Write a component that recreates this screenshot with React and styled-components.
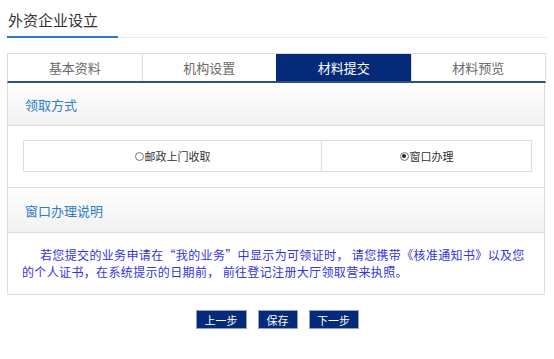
import React, { useState } from 'react';
import styled, { createGlobalStyle } from 'styled-components';

const GlobalStyle = createGlobalStyle`
  body {
    margin: 0;
    background: #fff;
    font-family: "Noto Sans CJK SC", "Noto Sans", sans-serif;
  }
`;

const tabs = ['基本资料', '机构设置', '材料提交', '材料预览'];

const options = [
  { key: 'post', label: '邮政上门收取' },
  { key: 'window', label: '窗口办理' },
];

export default function App() {
  const [active, setActive] = useState(2);
  const [method, setMethod] = useState('window');

  return (
    <>
      <GlobalStyle />
      <Page>
        <TitleBar>
          <Title>外资企业设立</Title>
        </TitleBar>

        <TabRow>
          {tabs.map((t, i) => (
            <Tab key={t} $active={i === active} onClick={() => setActive(i)}>
              {t}
            </Tab>
          ))}
        </TabRow>

        <Panel>
          <SectionHeader>领取方式</SectionHeader>
          <RadioWrap>
            <RadioRow>
              {options.map((o) => (
                <RadioCell key={o.key} onClick={() => setMethod(o.key)}>
                  <Dot $checked={method === o.key} />
                  {o.label}
                </RadioCell>
              ))}
            </RadioRow>
          </RadioWrap>

          <SectionHeader $top>窗口办理说明</SectionHeader>
          <Notice>
            若您提交的业务申请在“我的业务”中显示为可领证时， 请您携带《核准通知书》以及您的个人证书，在系统提示的日期前， 前往登记注册大厅领取营来执照。
          </Notice>
        </Panel>

        <Actions>
          <Button $w={51}>上一步</Button>
          <Button $w={40}>保存</Button>
          <Button $w={50}>下一步</Button>
        </Actions>
      </Page>
    </>
  );
}

const Page = styled.div`
  width: 540px;
  padding: 0 0 0 7px;
`;

const TitleBar = styled.div`
  height: 37px;
  border-bottom: 1px solid #e4ebf3;
  display: flex;
  align-items: flex-end;
`;

const Title = styled.div`
  width: 111px;
  height: 35px;
  box-sizing: border-box;
  padding: 6px 0 0 1px;
  border-bottom: 2px solid #2c78c4;
  margin-bottom: -1px;
  font-size: 15px;
  color: #333;
  line-height: 22px;
`;

const TabRow = styled.div`
  margin-top: 15px;
  display: flex;
  border-top: 1px solid #dcdcdc;
  border-left: 1px solid #dcdcdc;
  border-right: 1px solid #dcdcdc;
  border-bottom: 2px solid #2d4f8f;
  height: 27px;
  width: 537px;
`;

const Tab = styled.div`
  flex: 1;
  display: flex;
  align-items: center;
  justify-content: center;
  font-size: 13px;
  cursor: pointer;
  color: ${(p) => (p.$active ? '#fff' : '#6a6a6a')};
  background: ${(p) => (p.$active ? '#042a79' : '#fff')};
  border-left: 1px solid ${(p) => (p.$active ? '#042a79' : '#dcdcdc')};
  &:first-child {
    border-left: none;
  }
`;

const Panel = styled.div`
  width: 538px;
  box-sizing: border-box;
  border: 1px solid #dddddd;
  border-top: none;
`;

const SectionHeader = styled.div`
  height: 43px;
  box-sizing: border-box;
  padding-left: 17px;
  display: flex;
  align-items: center;
  font-size: 13px;
  color: #2d7bc6;
  background: linear-gradient(to bottom, #ffffff, #f1f1f1);
  border-top: ${(p) => (p.$top ? '1px solid #dcdcdc' : 'none')};
  border-bottom: 1px solid #dcdcdc;
  ${(p) => p.$top && 'height: 46px;'}
`;

const RadioWrap = styled.div`
  padding: 14px 12px 15px 15px;
`;

const RadioRow = styled.div`
  display: grid;
  grid-template-columns: 297px 1fr;
  height: 30px;
  border: 1px solid #dddddd;
`;

const RadioCell = styled.div`
  display: flex;
  align-items: center;
  justify-content: center;
  font-size: 11px;
  color: #333;
  cursor: pointer;
  & + & {
    border-left: 1px solid #dddddd;
  }
`;

const Dot = styled.span`
  width: 7px;
  height: 7px;
  border: 1px solid #777;
  border-radius: 50%;
  margin-right: 1px;
  position: relative;
  &::after {
    content: '';
    display: ${(p) => (p.$checked ? 'block' : 'none')};
    position: absolute;
    left: 1.5px;
    top: 1.5px;
    width: 4px;
    height: 4px;
    border-radius: 50%;
    background: #222;
  }
`;

const Notice = styled.div`
  padding: 13px 12px 14px 14px;
  text-indent: 18px;
  font-size: 12px;
  line-height: 17px;
  letter-spacing: 0.35px;
  color: #3333e0;
`;

const Actions = styled.div`
  display: flex;
  justify-content: center;
  gap: 11px;
  margin-top: 15px;
`;

const Button = styled.button`
  width: ${(p) => p.$w}px;
  height: 19px;
  padding: 0;
  background: #042a79;
  border: 1px solid #8ea2c8;
  color: #fff;
  font-family: inherit;
  font-size: 11px;
  cursor: pointer;
`;
